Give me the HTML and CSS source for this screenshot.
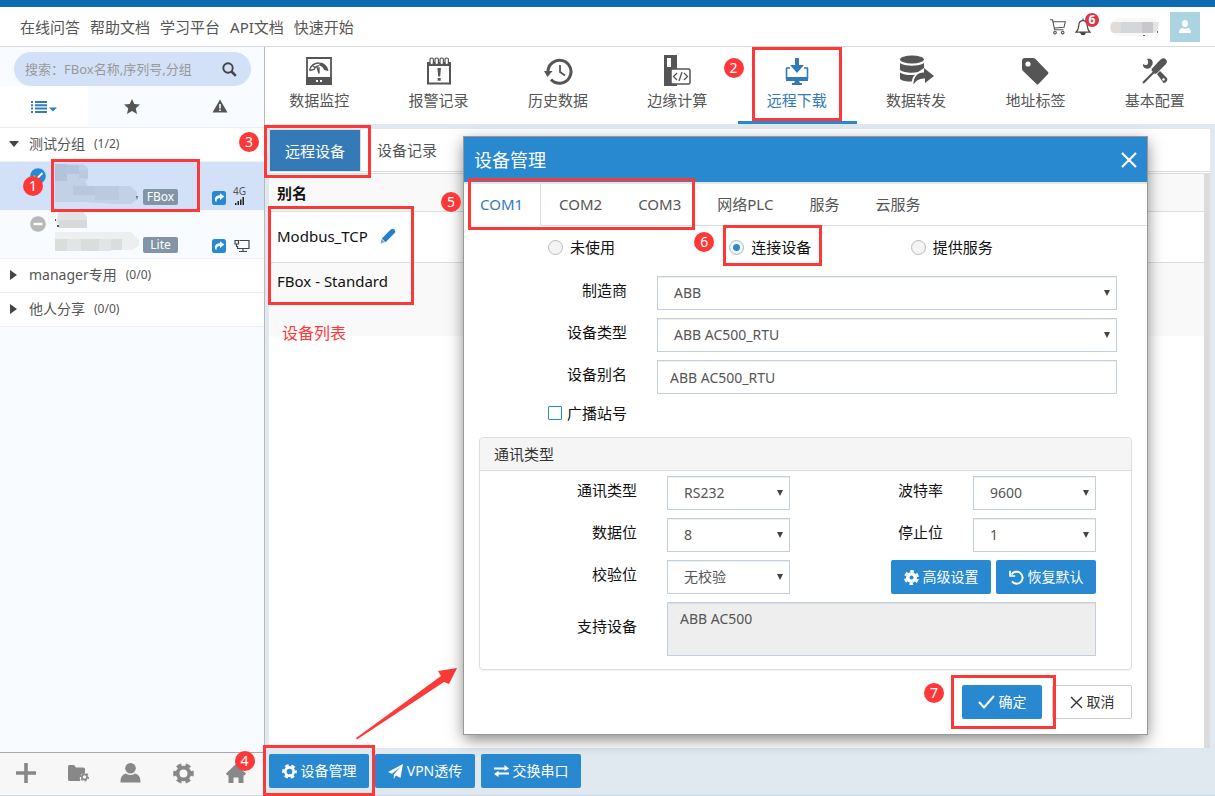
FILE: index.html
```html
<!DOCTYPE html>
<html lang="zh-CN">
<head>
<meta charset="utf-8">
<meta name="viewport" content="width=device-width, initial-scale=1">
<title>设备管理</title>
<link rel="stylesheet" href="styles.css">
</head>
<body>
<svg class="defs" aria-hidden="true">
  <symbol id="gear" viewBox="0 0 20 20"><circle cx="10" cy="10" r="5.6" fill="none" stroke="currentColor" stroke-width="3.6"/><circle cx="10" cy="10" r="8.2" fill="none" stroke="currentColor" stroke-width="3.2" pathLength="12" stroke-dasharray="1.1 0.9" stroke-dashoffset="0.55"/></symbol>
  <symbol id="share" viewBox="0 0 14 14"><rect width="14" height="14" rx="2.5" fill="#2889d1"/><path d="M8 2.2 12.3 5.6 8 9V7C5.6 7 4.4 8 4.3 11.3 1.6 8.4 2.9 4.3 8 4.2Z" fill="#fff"/></symbol>
</svg>
<div class="page">
  <header class="top">
    <nav class="links">
      <a href="#">在线问答</a><a href="#">帮助文档</a><a href="#">学习平台</a><a href="#">API文档</a><a href="#">快速开始</a>
    </nav>
    <div class="account">
      <svg width="16" height="16" viewBox="0 0 16 16" fill="none" stroke="#555" stroke-width="1.1"><path d="M0 .8h2.6l2 10h9M3.3 2.8h12l-1.3 5.400L4.200 9"/><circle cx="5" cy="13.600" r="1.300"/><circle cx="12.700" cy="13.600" r="1.300"/></svg>
      <span class="bell">
        <svg width="16" height="18" viewBox="0 0 16 18" fill="none" stroke="#444" stroke-width="1.200"><path d="M8 .5v2M1 14.200c2.200-2 2.600-3.500 2.800-7C4 4 5.800 2.600 8 2.600S12 4 12.200 7.200c.2 3.500.6 5 2.800 7Z"/><path d="M5.800 14.800c.4 2.400 4 2.400 4.400 0Z" fill="#444"/></svg>
        <span class="count">6</span>
      </span>
      <svg class="alias" width="52" height="22" viewBox="0 0 52 22"><rect x="2" y="2" width="48" height="18" rx="8" fill="#f8f8f8"/><path d="M5 6h7v11H5c-5 0-5-11 0-11Z" fill="#e2dcd8"/><path d="M12 6h10v11H12z" fill="#d2d7dc"/><path d="M22 6h11v11H22z" fill="#d6d6d9"/><path d="M33 6h11v11H33z" fill="#c8c8cc"/><path d="M44 6h6l-1 8-4 3h-1z" fill="#e4e4e4"/><path d="M34 19h2v1h-2zM48 15h1v2h-1z" fill="#567"/></svg>
      <button class="avatar" aria-label="账户"><svg width="12" height="13" viewBox="0 0 12 13" fill="#fff"><ellipse cx="6" cy="3.500" rx="3" ry="3.500"/><path d="M0 13c0-4 2-5 3.500-5 1.500 1 3.500 1 5 0C10 8 12 9 12 13Z"/></svg></button>
    </div>
  </header>

  <div class="body">
    <aside class="side">
      <div class="search">
        <input type="text" placeholder="搜索：FBox名称,序列号,分组" aria-label="搜索">
        <button aria-label="搜索"><svg width="15" height="15" viewBox="0 0 15 15" fill="none" stroke="#444"><circle cx="6" cy="6" r="4.700" stroke-width="1.900"/><path d="m9.500 9.500 4.300 4.300" stroke-width="2.500"/></svg></button>
      </div>
      <div class="filters">
        <button class="on" aria-label="列表"><svg width="26" height="13" viewBox="0 0 26 13" fill="#337ab7"><path d="M0 1h2v2H0zM4 1h12v2H4zM0 4.300h2v2H0zM4 4.300h12v2H4zM0 7.600h2v2H0zM4 7.600h12v2H4zM0 11h2v2H0zM4 11h12v2H4zM18 7.500h8l-4 4z"/></svg></button>
        <button aria-label="收藏"><svg width="16" height="15" viewBox="0 0 16 15" fill="#555"><path d="m8 0 2.300 5 5.700.6-4.200 3.700L13 15l-5-3-5 3 1.200-5.700L0 5.600 5.700 5Z"/></svg></button>
        <button aria-label="报警"><svg width="16" height="14" viewBox="0 0 16 14"><path d="M8 .5 15.500 13.500H.5Z" fill="#555"/><path d="M7.200 5h1.600v4.500H7.200zM7.200 10.500h1.600V12H7.200z" fill="#fff"/></svg></button>
      </div>
      <div class="tree">
        <div class="group"><i class="tri open"></i><span>测试分组</span><small>(1/2)</small><b class="num n3">3</b></div>
        <div class="box sel">
          <svg class="state" width="16" height="16" viewBox="0 0 16 16"><circle cx="8" cy="8" r="7.800" fill="#2889d1"/><path d="m3.500 8 3 3 6-6" fill="none" stroke="#fff" stroke-width="1.800"/></svg>
          <svg class="name" width="86" height="44" viewBox="0 0 86 44"><path d="M2 2h28l5 4v11l-3 3 3 4h42l7 6v7l-6 5H62L30 40H2Z" fill="#c3d0e5"/><path d="M2 2h12v17H2z" fill="#b3c3da"/><path d="M14 3h12v9H14z" fill="#b5c5dd"/><path d="M26 8h9v8h-9z" fill="#bac9de"/><path d="M20 24h22v9H20z" fill="#b7c7de"/><path d="M42 24h24v14H42z" fill="#bccadf"/><path d="m83 34 2 0-1 4" fill="#567"/></svg>
          <span class="tag">FBox</span>
          <svg class="share" width="14" height="14"><use href="#share"/></svg>
          <span class="net">4G<svg width="9" height="8" viewBox="0 0 9 8" fill="#222"><path d="M0 6h1.500v2H0zM2.500 4H4v4H2.500zM5 2.500h1.500V8H5zM7.500 0H9v8H7.500z"/></svg></span>
          <b class="num n1">1</b><i class="mark m1"></i>
        </div>
        <div class="box">
          <svg class="state" width="16" height="16" viewBox="0 0 16 16"><circle cx="8" cy="8" r="7.800" fill="#b8b8b8"/><path d="M3.500 8h9" stroke="#fff" stroke-width="2.500"/></svg>
          <svg class="name" width="86" height="44" viewBox="0 0 86 44"><path d="M6 2h24l4 5v10H8L3 12Z" fill="#e2e4e4"/><path d="M6 10h28v8H6z" fill="#d8dada"/><path d="M2 22h76l8 8v5l-6 5H2z" fill="#eceeef"/><path d="M2 29h12v12H2zM28 29h18v12H28zM58 29h11v11H58z" fill="#dbdddd"/><path d="M14 29h14v12H14zM46 29h12v12H46z" fill="#e2e4e5"/><path d="M2 9h1v2H2zM4 15h2v2H4z" fill="#555"/></svg>
          <span class="tag">Lite</span>
          <svg class="share" width="14" height="14"><use href="#share"/></svg>
          <svg class="wired" width="16" height="14" viewBox="0 0 16 14" fill="none" stroke="#444" stroke-width="1.200"><path d="M5.500 1.500h9.500v8H3.500V7M9 9.500v3M5 12.500h8M1 1.500h3.500v3.500H1zM2.500 5v3"/></svg>
        </div>
        <div class="group"><i class="tri"></i><span>manager专用</span><small>(0/0)</small></div>
        <div class="group"><i class="tri"></i><span>他人分享</span><small>(0/0)</small></div>
      </div>
      <div class="tools">
        <button aria-label="添加"><svg width="20" height="20" viewBox="0 0 20 20"><path d="M10 0v20M0 10h20" stroke="#888" stroke-width="3.600"/></svg></button>
        <button aria-label="分组管理"><svg width="21" height="18" viewBox="0 0 21 18"><path d="M0 2.500Q0 1 1.500 1H6l2 2.500h7Q17 3.500 17 5v4c-4 0-6 3-4.800 8H1.500Q0 17 0 15.500Z" fill="#888"/><circle cx="16.500" cy="13" r="2.600" fill="none" stroke="#888" stroke-width="1.700"/><circle cx="16.500" cy="13" r="4" fill="none" stroke="#888" stroke-width="1.200" pathLength="12" stroke-dasharray="1 1"/></svg></button>
        <button aria-label="用户"><svg width="21" height="20" viewBox="0 0 21 20" fill="#888"><circle cx="10.500" cy="5.300" r="5.300"/><path d="M.5 19.500c0-6 2-8 5.500-9 3 2 6 2 9 0 3.500 1 5.500 3 5.500 9Z"/></svg></button>
        <button aria-label="设置"><svg width="21" height="21"><use href="#gear"/></svg></button>
        <button aria-label="主页"><svg width="20" height="19" viewBox="0 0 20 19" fill="#888"><path d="M10 0 20 9.500 19 11.200H17.500V19H12.500V13.500H7.500V19H2.500V11.200H1L0 9.500Z"/></svg><b class="num n4">4</b></button>
      </div>
    </aside>

    <main class="main">
      <nav class="modules">
        <a href="#"><svg width="28" height="28" viewBox="0 0 28 28"><path d="M2 1h24v26H2z" fill="#fff" stroke="#555" stroke-width="1.800"/><path d="M1 20h26v8H1z" fill="#555"/><path d="M14 5.500C19 5.500 22.500 8.500 23.500 14l-4.500-1c-.5-2-2-3.800-4.500-4.200Z" fill="#555"/><path d="M4.500 13.500C6 7.500 10 6 14 6M4.500 13.500 9 12.500C10 10 11.500 9 14 8.700M8 9l2.500 2M12 10l2 6.500V10" fill="none" stroke="#555" stroke-width="1.300"/><path d="M11 23h2v2h-2zM15 23h2v2h-2z" fill="#fff"/></svg><span>数据监控</span></a>
        <a href="#"><svg width="26" height="28" viewBox="0 0 26 28"><path d="M2 6.500h22v20H2z" fill="#fff" stroke="#555" stroke-width="2"/><path d="M1 5h24v4H1z" fill="#555"/><g fill="#fff" stroke="#555" stroke-width="1.200"><rect x="4" y="1" width="3.400" height="6.500" rx="1.600"/><rect x="9" y="1" width="3.400" height="6.500" rx="1.600"/><rect x="14" y="1" width="3.400" height="6.500" rx="1.600"/><rect x="19" y="1" width="3.400" height="6.500" rx="1.600"/></g><path d="M11.500 11h3.400l-.7 8.500h-2zM11.700 21h3v2.800h-3z" fill="#555"/></svg><span>报警记录</span></a>
        <a href="#"><svg width="30" height="28" viewBox="0 0 30 28" fill="none" stroke="#555"><path d="M5 15A11.500 11.500 0 1 1 8 22.500" stroke-width="3"/><path d="m1 14 8.500 0L4.500 20Z" fill="#555" stroke="none"/><path d="M17 8v7l5 3.500" stroke-width="1.800"/></svg><span>历史数据</span></a>
        <a href="#"><svg width="28" height="32" viewBox="0 0 28 32"><path d="M1 0h13v31H1z" fill="#555"/><path d="M4 3h4v9H4z" fill="#fff"/><rect x="8" y="14" width="19" height="15" rx="1.500" fill="#fff" stroke="#555" stroke-width="1.500"/><path d="m14 18-3.500 3.500L14 25M21 18l3.500 3.500L21 25M19 17l-3 9" fill="none" stroke="#555" stroke-width="1.300"/></svg><span>边缘计算</span></a>
        <a href="#" class="on"><svg width="24" height="28" viewBox="0 0 24 28" fill="#337ab7"><path d="M10 1h4v7h5l-7 8-7-8h5z"/><path d="M1.500 11v11M22.500 11v11M1 11h4M19 11h4" stroke="#337ab7" stroke-width="1.600" fill="none"/><path d="M1 20h22v4H1zM10 24h4l1 2h2v2H7v-2h2z"/></svg><span>远程下载</span><b class="num n2">2</b><i class="mark m2"></i></a>
        <a href="#"><svg width="35" height="32" viewBox="0 0 35 32" fill="#555"><ellipse cx="13" cy="4.500" rx="12" ry="4"/><path d="M1 8c4 3.500 20 3.500 24 0v5l-6 4c-6 1.500-15 .5-18-2ZM1 17.500c4 2.500 10 3 15 2.200-2 2-2.800 4-3.200 6.800C7 26.500 3 26 1 24Z"/><path d="m25 13 10 8-9 7v-4.500c-5-.5-9 1.500-11.500 6C14.500 22 18 17.500 25 17.500Z"/></svg><span>数据转发</span></a>
        <a href="#"><svg width="28" height="28" viewBox="0 0 28 28"><path d="M1 4q0-3 3-3l8 0q1.500 0 2.500 1L27 15q1 1 0 2L17.500 27q-1 1-2 0L2 14q-1-1-1-2.500Z" fill="#555"/><circle cx="7" cy="7" r="2.600" fill="#fff"/></svg><span>地址标签</span></a>
        <a href="#"><svg width="26" height="26" viewBox="0 0 26 26"><path d="m1 25 13-13" stroke="#555" stroke-width="2.200"/><path d="m9.500 12.500 3.500 3.500 2-1 9-9q2-3-.5-5T18 2L10 10.500Z" fill="#555"/><path d="M1 6c2 1.500 4 1.500 5-.5C6.500 4 6 2 5 1c4-1 6.500 1.500 5.500 5.500L8 10C4 12 .500 9.500 1 6Z" fill="#555"/><path d="m15 16 3-3 7 7q1 2-.5 3.500T21.500 25Z" fill="#555"/><circle cx="21.500" cy="21.500" r="1.300" fill="#fff"/></svg><span>基本配置</span></a>
      </nav>
      <section class="content">
        <div class="subtabs">
          <button class="on">远程设备<i class="mark m3"></i></button><button>设备记录</button>
        </div>
        <div class="listing">
          <table>
            <thead><tr><th>别名</th></tr></thead>
            <tbody>
              <tr><td>Modbus_TCP <svg class="pen" width="16" height="16" viewBox="0 0 16 16"><path d="m.5 15.500 1-4.500L4.800 14.500Z" fill="#8aa8c8"/><path d="m1.800 10.500 9.200-9.200q1.500-1.300 3 0l.7.7q1.300 1.500 0 3L5.500 14.200Z" fill="#2380cf"/></svg></td></tr>
              <tr><td>FBox - Standard</td></tr>
            </tbody>
          </table>
          <i class="mark m-list"></i>
          <span class="note">设备列表</span>
        </div>
        <svg class="arrow" width="104" height="76" viewBox="0 0 104 76"><path d="M0 74 85 12 82 7 101 4 93 20 88 18 1 75.500Z" fill="#fc3b38"/></svg>
      </section>
      <footer class="actions">
        <button class="btn"><svg width="15" height="15"><use href="#gear"/></svg>设备管理<i class="mark m4"></i></button>
        <button class="btn"><svg width="15" height="15" viewBox="0 0 15 15" fill="#fff"><path d="M15 0 12.500 14 8 11.500 5.800 15V10.600L12.500 3 4 9.700 0 8Z"/></svg>VPN透传</button>
        <button class="btn"><svg width="15" height="12" viewBox="0 0 15 12" fill="#fff"><path d="M0 2.500h10.500V0L15 3.500 10.500 6V4.500H0zM15 7.500H4.500V5.800L0 9l4.500 3V9.500H15z"/></svg>交换串口</button>
      </footer>
    </main>
  </div>

  <div class="dialog" role="dialog" aria-label="设备管理">
    <div class="dhead"><h1>设备管理</h1><button aria-label="关闭"><svg width="16" height="16" viewBox="0 0 16 16"><path d="m1 1 14 14M15 1 1 15" stroke="#fff" stroke-width="2.200"/></svg></button></div>
    <div class="dtabs">
      <button class="on">COM1</button><button>COM2</button><button>COM3</button><button>网络PLC</button><button>服务</button><button>云服务</button>
      <b class="num n5">5</b><i class="mark m5"></i>
    </div>
    <form>
      <div class="modes">
        <label><input type="radio" name="mode">未使用</label>
        <label><input type="radio" name="mode" checked>连接设备<b class="num n6">6</b><i class="mark m6"></i></label>
        <label><input type="radio" name="mode">提供服务</label>
      </div>
      <div class="fields">
        <label for="maker">制造商</label><div class="pick"><select id="maker"><option>ABB</option></select></div>
        <label for="kind">设备类型</label><div class="pick"><select id="kind"><option>ABB AC500_RTU</option></select></div>
        <label for="alias">设备别名</label><input id="alias" type="text" value="ABB AC500_RTU">
      </div>
      <label class="cast"><input type="checkbox">广播站号</label>
      <fieldset>
        <h2>通讯类型</h2>
        <div class="comm">
          <label for="bus">通讯类型</label><div class="pick"><select id="bus"><option>RS232</option></select></div>
          <label for="baud">波特率</label><div class="pick"><select id="baud"><option>9600</option></select></div>
          <label for="bits">数据位</label><div class="pick"><select id="bits"><option>8</option></select></div>
          <label for="stop">停止位</label><div class="pick"><select id="stop"><option>1</option></select></div>
          <label for="parity">校验位</label><div class="pick"><select id="parity"><option>无校验</option></select></div>
          <div class="pair">
            <button type="button" class="btn"><svg width="15" height="15" viewBox="0 0 20 20"><circle cx="10" cy="10" r="5" fill="none" stroke="#fff" stroke-width="4.600"/><circle cx="10" cy="10" r="8.400" fill="none" stroke="#fff" stroke-width="3.200" pathLength="12" stroke-dasharray="1.100 0.900" stroke-dashoffset="-0.450"/></svg>高级设置</button>
            <button type="button" class="btn"><svg width="15" height="15" viewBox="0 0 15 15" fill="none" stroke="#fff"><path d="M2.500 4.500A6 6 0 1 1 3 11.500" stroke-width="2"/><path d="M1 .8V6h5.200" stroke-width="1.700"/></svg>恢复默认</button>
          </div>
          <label for="support" class="mid">支持设备</label><textarea id="support" readonly>ABB AC500</textarea>
        </div>
      </fieldset>
      <div class="confirm">
        <span class="okwrap"><button type="button" class="btn ok"><svg width="17" height="14" viewBox="0 0 17 14" fill="none" stroke="#fff" stroke-width="2"><path d="m1 7 5 5.500L16 1"/></svg>确定</button><b class="num n7">7</b><i class="mark m7"></i></span>
        <button type="button" class="btn plain"><svg width="13" height="13" viewBox="0 0 13 13"><path d="m1 1 11 11M12 1 1 12" stroke="#333" stroke-width="1.400"/></svg>取消</button>
      </div>
    </form>
  </div>
</div>
</body>
</html>
```
FILE: styles.css
```css
* { box-sizing: border-box; }
body { margin: 0; font: 15px/20px "Noto Sans", "Noto Sans CJK SC", sans-serif; color: #555; }
button, input, select, textarea { font: inherit; color: inherit; margin: 0; }
button { border: 0; background: none; padding: 0; }
a { color: inherit; text-decoration: none; }
svg { display: block; flex: none; }
.defs { position: absolute; width: 0; height: 0; }

.page { position: relative; display: flex; flex-direction: column; min-height: 100vh; border-top: 7px solid #0d6bb1; border-bottom: 1px solid #c9dcea; background: #fff; }
.top { display: flex; justify-content: space-between; align-items: center; height: 40px; padding: 0 15px 0 20px; border-bottom: 1px solid #d6d8d9; }
.links { display: flex; gap: 10px; }
.account { display: flex; align-items: center; gap: 9px; }
.bell { position: relative; margin-right: 9px; }
.count { position: absolute; left: 10px; top: -5px; width: 14px; height: 14px; border-radius: 50%; background: #dc3545; color: #fff; font-size: 12px; line-height: 14px; font-weight: 700; text-align: center; }
.avatar { display: grid; place-items: center; width: 30px; height: 30px; background: #abd3e2; }

.body { flex: 1; display: flex; }
.side { display: flex; flex-direction: column; width: 265px; flex: none; border-right: 1px solid #b9b9b9; background: #f8fbff; }
.search { display: flex; align-items: center; justify-content: space-between; margin: 5px 13px 0 14px; padding: 0 14px 0 11px; height: 34px; border-radius: 17px; background: #d3e1f8; font-size: 13px; }
.search input { flex: 1; min-width: 0; border: 0; padding: 0; background: none; outline: 0; }
.search input::placeholder { color: #999; opacity: 1; }
.filters { display: grid; grid-template-columns: repeat(3, 1fr); height: 42px; padding-bottom: 1px; border-bottom: 1px solid #eee; }
.filters button { display: grid; place-items: center; }
.filters .on { background: #fff; }
.tree { flex: 1; font-size: 14px; }
.group { position: relative; display: flex; align-items: center; height: 34px; padding: 0 0 2px 8px; background: #fff; border-bottom: 1px solid #eef1f4; }
.group span { margin-left: 10px; }
.group small { margin-left: 9px; font-size: 12px; }
.tri { width: 11px; display: flex; justify-content: center; }
.tri::before { content: ""; border-style: solid; border-color: transparent transparent transparent #444; border-width: 5px 0 5px 7px; }
.tri.open::before { border-color: #444 transparent transparent; border-width: 6px 5px 0; }
.box { position: relative; display: flex; align-items: flex-end; height: 48px; padding: 0 20px 5px 30px; }
.box + .box { height: 49px; border-bottom: 1px solid #eef1f4; }
.box.sel { background: #d3e1f8; }
.state { align-self: flex-start; margin-top: 6px; }
.name { margin: 0 2px 0 7px; align-self: center; }
.tag { flex: none; width: 35px; height: 16px; border-radius: 2px; background: #8295a6; color: #fff; font-size: 12px; line-height: 16px; text-align: center; margin-left: 2px; }
.share { margin-left: 34px; }
.net { display: flex; flex-direction: column; align-items: center; margin-left: 7px; font-size: 10px; line-height: 9px; gap: 1px; }
.wired { margin-left: 8px; }
.tools { display: grid; grid-template-columns: repeat(5, 1fr); height: 43px; padding: 0 2px 2px 0; border-top: 1px solid #a9a9a9; background: #f7f7f7; color: #888; }
.tools button { position: relative; display: grid; place-items: center; color: inherit; }

.main { flex: 1; min-width: 0; display: flex; flex-direction: column; background: #e0e8f0; }
.modules { display: grid; grid-template-columns: repeat(8, 1fr); height: 77px; margin-left: -5px; background: linear-gradient(90deg, transparent 5px, #fff 5px); }
.modules a { position: relative; display: flex; flex-direction: column; align-items: center; justify-content: flex-end; padding: 4px 1px 11px 0; border-bottom: 3px solid transparent; }
.modules svg { margin: auto; }
.modules .on { color: #337ab7; border-color: #2889d1; }
.content { position: relative; flex: 1; display: flex; flex-direction: column; margin: 5px 5px 0 4px; background: #fff; }
.subtabs { display: flex; height: 43px; border-bottom: 1px solid #ddd; }
.subtabs button { position: relative; padding: 0 16px; }
.subtabs .on { width: 92px; padding: 0; background: #337ab7; color: #fff; border: solid #ddd; border-width: 1px 1px 0; }
.listing { position: relative; flex: 1; margin-top: 1px; border-top: 1px solid #ddd; border-right: 6px solid #dcdcdc; }
table { width: 100%; border-spacing: 0; color: #111; }
th { height: 38px; padding: 0 8px; text-align: left; background: #f9f9f9; border-bottom: 1px solid #ddd; }
td { height: 51px; padding: 0 8px 2px; border-bottom: 1px solid #ddd; }
tr:last-child td { height: 73px; padding-bottom: 38px; background: #f9f9f9; border: 0; }
.pen { display: inline-block; vertical-align: -2px; margin-left: 8px; }
.actions { display: flex; gap: 6px; padding: 6px 4px 7px; }

.btn { position: relative; display: flex; align-items: center; justify-content: center; gap: 4px; width: 100px; height: 34px; border-radius: 2px; background: #2889d1; color: #fff; font-size: 14px; }
.btn.plain { width: 80px; background: #fff; color: #333; border: 1px solid #ccc; }
.btn.ok { width: 80px; }

.dialog { position: absolute; left: 464px; right: 68px; top: 130px; background: #fff; box-shadow: 0 0 0 1px #999, 0 5px 15px rgba(0, 0, 0, .5); }
.dhead { display: flex; align-items: center; justify-content: space-between; height: 47px; padding: 0 10px; background: #2889d1; color: #fff; border-bottom: 2px solid #e5e5e5; }
h1 { margin: 0; font-size: 18px; font-weight: 400; }
.dtabs { position: relative; display: flex; height: 42px; }
.dtabs::after { content: ""; flex: 1; border-bottom: 1px solid #ddd; }
.dtabs button { padding: 0 18px 2px; border-bottom: 1px solid #ddd; }
.dtabs .on { padding: 0 17px 2px 16px; color: #337ab7; border-bottom-color: #fff; border-right: 1px solid #ddd; }
form { padding: 0 15px 15px; color: #111; }
.modes { display: grid; grid-template-columns: repeat(3, 1fr); padding: 11px 40px 0 69px; }
.modes label { position: relative; display: flex; align-items: center; gap: 7px; justify-self: start; }
input[type=radio] { appearance: none; width: 15px; height: 15px; border: 1px solid #bbb; border-radius: 50%; background: #f4f4f4; }
input[type=radio]:checked { border-color: #a3b8c8; background: radial-gradient(circle, #2889d1 3px, #f4f7fa 4px); }
.fields { display: grid; grid-template-columns: 148px 1fr; gap: 8px 30px; padding: 19px 15px 0 0; }
.fields > label, .comm > label { padding-top: 4px; text-align: right; }
.fields > input { height: 34px; padding: 0 12px; }
.pick { position: relative; }
.pick::after { content: ""; position: absolute; right: 7px; top: 14px; border: solid transparent; border-width: 6px 3px 0; border-top-color: #444; pointer-events: none; }
select, .fields > input, textarea { width: 100%; border: 1px solid #c2cfdc; border-radius: 0; background: #fff; box-shadow: inset 0 1px 1px rgba(0, 0, 0, .07); font-size: 14px; color: #555; }
select { display: block; appearance: none; height: 34px; padding: 0 16px; }
.cast { display: flex; align-items: center; gap: 5px; padding: 9px 0 0 69px; }
input[type=checkbox] { appearance: none; width: 14px; height: 14px; border: 1px solid #2889d1; border-radius: 1px; background: #fff; }
fieldset { min-width: 0; margin: 14px 0 0; padding: 0; border: 1px solid #ddd; border-radius: 4px; box-shadow: 0 1px 1px rgba(0, 0, 0, .05); }
h2 { margin: 0; padding: 6px 14px; font-size: 15px; line-height: 20px; font-weight: 400; color: #333; background: #f5f5f5; border-bottom: 1px solid #ddd; border-radius: 3px 3px 0 0; }
.comm { display: grid; grid-template-columns: 157px 123px 1fr 123px; gap: 8px 30px; padding: 5px 35px 13px 0; }
.pair { grid-column: 3 / 5; display: flex; justify-content: flex-end; gap: 5px; }
.comm .mid { padding-top: 14px; }
textarea { grid-column: 2 / 5; height: 54px; padding: 6px 12px; line-height: 20px; background: #eee; resize: none; }
.confirm { display: flex; justify-content: flex-end; gap: 10px; padding-top: 15px; }
.okwrap { position: relative; }

.num { position: absolute; z-index: 2; width: 20px; height: 20px; border-radius: 50%; background: #fc3838; color: #fff; font-size: 14px; line-height: 20px; font-weight: 400; text-align: center; }
.mark { position: absolute; z-index: 1; border: 3px solid #fc3838; pointer-events: none; }
.n1 { left: 23px; top: 14px; }
.m1 { left: 51px; right: 64px; top: -3px; bottom: -2px; }
.n2 { left: -14px; top: 11px; }
.m2 { inset: 0 15px 0 14px; }
.n3 { right: 5px; top: 4px; }
.m3 { inset: -5px -11px -7px -6px; }
.n4 { left: 25px; top: -2px; }
.m4 { inset: -9px -6px -8px; }
.n5 { left: -23px; top: 8px; }
.m5 { left: 4px; top: -6px; width: 227px; bottom: -4px; }
.n6 { left: -35px; top: -5px; }
.m6 { inset: -12px -11px -9px -6px; }
.n7 { left: -38px; top: -2px; }
.m7 { inset: -10px -14px -10px -11px; }
.m-list { left: -1px; top: 32px; width: 146px; height: 99px; }
.note { position: absolute; left: 13px; top: 149px; font-size: 16px; color: #fc3838; }
.arrow { position: absolute; left: 87px; bottom: 8px; }
```
